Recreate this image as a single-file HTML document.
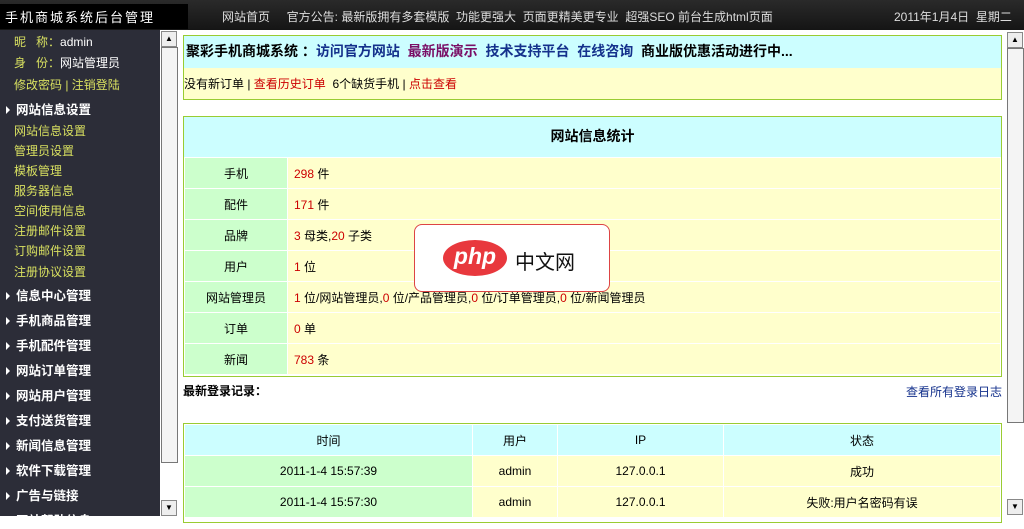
<!DOCTYPE html>
<html><head><meta charset="utf-8"><style>
*{margin:0;padding:0;box-sizing:border-box}
body{width:1024px;height:516px;overflow:hidden;background:#fff;font-family:"Liberation Sans","Noto Sans CJK SC",sans-serif;font-size:12px;color:#000;position:relative}
.top{position:absolute;left:0;top:0;width:1024px;height:30px;background:linear-gradient(#2a2a2a,#151515);color:#ddd;font-size:12px}
.logo{position:absolute;left:0;top:4px;width:188px;height:25px;background:#000;color:#fff;font-size:13px;letter-spacing:2px;padding:3px 0 0 5px}
.side{position:absolute;left:0;top:30px;width:160px;height:486px;background:#2c2d38;color:#fff}
.side div{position:absolute;left:0;white-space:nowrap}
.y{color:#d8e060;font-size:12px;left:14px!important}
.h{font-weight:bold;font-size:12.5px;left:6px!important;color:#fff}
.h:before{content:"";display:inline-block;border-left:4px solid #fff;border-top:4px solid transparent;border-bottom:4px solid transparent;margin-right:6px;vertical-align:0}
.sb{position:absolute;width:17px;background:#f4f4f4;border:1px solid #777}
.arr{position:absolute;width:16px;height:16px;background:#eee;border:1px solid #888}
.box{position:absolute;left:183px;width:819px;border:1px solid #9c3;}
.cy{background:#ccfeff}.le{background:#ffffcc}.gr{background:#ccffcc}
table{border-collapse:collapse;width:100%}
td{height:31px;border:1px solid #fff;text-align:center}
.red{color:#c00}
</style></head><body>
<div class="top">
<div class="logo">手机商城系统后台管理</div>
<div style="position:absolute;left:222px;top:8px">网站首页 &nbsp;&nbsp;&nbsp; 官方公告: 最新版拥有多套模版 &nbsp;功能更强大 &nbsp;页面更精美更专业 &nbsp;超强SEO 前台生成html页面</div>
<div style="position:absolute;left:894px;top:8px">2011年1月4日 &nbsp;星期二</div>
</div>
<div class="side">
<div class="y" style="top:3px">昵 &nbsp; 称：<span style="color:#fff">admin</span></div>
<div class="y" style="top:24px">身 &nbsp; 份：<span style="color:#fff">网站管理员</span></div>
<div class="y" style="top:46px">修改密码 | 注销登陆</div>
<div class="h" style="top:69px">网站信息设置</div>
<div class="y" style="top:92px">网站信息设置</div>
<div class="y" style="top:112px">管理员设置</div>
<div class="y" style="top:132px">模板管理</div>
<div class="y" style="top:152px">服务器信息</div>
<div class="y" style="top:172px">空间使用信息</div>
<div class="y" style="top:192px">注册邮件设置</div>
<div class="y" style="top:212px">订购邮件设置</div>
<div class="y" style="top:233px">注册协议设置</div>
<div class="h" style="top:255px">信息中心管理</div>
<div class="h" style="top:280px">手机商品管理</div>
<div class="h" style="top:305px">手机配件管理</div>
<div class="h" style="top:330px">网站订单管理</div>
<div class="h" style="top:355px">网站用户管理</div>
<div class="h" style="top:380px">支付送货管理</div>
<div class="h" style="top:405px">新闻信息管理</div>
<div class="h" style="top:430px">软件下载管理</div>
<div class="h" style="top:455px">广告与链接</div>
<div class="h" style="top:480px">网站帮助信息</div>
</div>
<div style="position:absolute;left:160px;top:30px;width:18px;height:486px;background:#fff"></div>
<div class="sb" style="left:161px;top:47px;height:416px"></div>
<div class="arr" style="left:161px;top:31px;text-align:center;font-size:8px;line-height:13px">▲</div>
<div class="arr" style="left:161px;top:500px;text-align:center;font-size:8px;line-height:13px">▼</div>
<div class="sb" style="left:1007px;top:48px;height:375px"></div>
<div class="arr" style="left:1007px;top:32px;text-align:center;font-size:8px;line-height:13px">▲</div>
<div class="arr" style="left:1007px;top:499px;text-align:center;font-size:8px;line-height:13px">▼</div>

<div class="box" style="top:35px;height:65px">
<div class="cy" style="height:32px;padding:5px 0 0 2px;font-weight:bold;font-size:14px">聚彩手机商城系统 ：<span style="color:#14318c">访问官方网站</span> &nbsp;<span style="color:#7a0f66">最新版演示</span> &nbsp;<span style="color:#14318c">技术支持平台 &nbsp;在线咨询</span> &nbsp;商业版优惠活动进行中...</div>
<div class="le" style="height:31px;padding:7px 0 0 0">没有新订单 | <span class="red">查看历史订单</span> &nbsp;6个缺货手机 | <span class="red">点击查看</span></div>
</div>

<div class="box" style="top:116px;height:261px">
<div class="cy" style="height:40px;text-align:center;font-weight:bold;font-size:14px;padding-top:9px">网站信息统计</div>
<table>
<tr><td class="gr" style="width:103px">手机</td><td class="le" style="text-align:left;padding-left:6px"><span class="red">298</span> 件</td></tr>
<tr><td class="gr">配件</td><td class="le" style="text-align:left;padding-left:6px"><span class="red">171</span> 件</td></tr>
<tr><td class="gr">品牌</td><td class="le" style="text-align:left;padding-left:6px"><span class="red">3</span> 母类,<span class="red">20</span> 子类</td></tr>
<tr><td class="gr">用户</td><td class="le" style="text-align:left;padding-left:6px"><span class="red">1</span> 位</td></tr>
<tr><td class="gr">网站管理员</td><td class="le" style="text-align:left;padding-left:6px"><span class="red">1</span> 位/网站管理员,<span class="red">0</span> 位/产品管理员,<span class="red">0</span> 位/订单管理员,<span class="red">0</span> 位/新闻管理员</td></tr>
<tr><td class="gr">订单</td><td class="le" style="text-align:left;padding-left:6px"><span class="red">0</span> 单</td></tr>
<tr><td class="gr">新闻</td><td class="le" style="text-align:left;padding-left:6px"><span class="red">783</span> 条</td></tr>
</table>
</div>

<div style="position:absolute;left:183px;top:382px;font-weight:bold">最新登录记录：</div>
<div style="position:absolute;left:906px;top:383px;color:#14318c">查看所有登录日志</div>

<div class="box" style="top:423px;height:100px">
<table>
<tr class="cy"><td style="width:288px;height:28px">时间</td><td style="width:85px">用户</td><td style="width:166px">IP</td><td>状态</td></tr>
<tr><td class="gr">2011-1-4 15:57:39</td><td class="le">admin</td><td class="le">127.0.0.1</td><td class="le">成功</td></tr>
<tr><td class="gr">2011-1-4 15:57:30</td><td class="le">admin</td><td class="le">127.0.0.1</td><td class="le">失败:用户名密码有误</td></tr>
</table>
</div>

<div style="position:absolute;left:414px;top:224px;width:196px;height:68px;background:#fff;border:1px solid #d44;border-radius:8px">
<div style="position:absolute;left:28px;top:15px;width:64px;height:36px;border-radius:50%;background:#e8383d;color:#fff;font-weight:bold;font-style:italic;font-size:23px;text-align:center;line-height:33px">php</div>
<div style="position:absolute;left:100px;top:21px;font-size:20px;color:#111">中文网</div>
</div>
</body></html>
